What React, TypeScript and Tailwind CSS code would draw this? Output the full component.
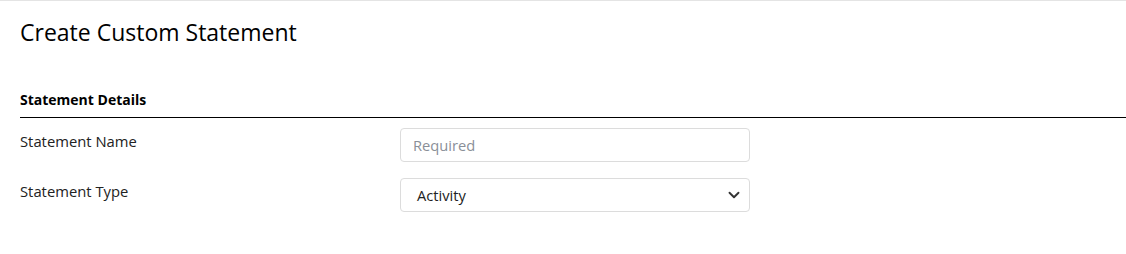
import { ChevronDown } from 'lucide-react';

export default function App() {
  return (
    <div className="min-h-[254px] w-full bg-white border-t border-[#e4e4e4] font-['Open_Sans',sans-serif] text-[#1a1a1a]">
      <div className="pl-5">
        <h1 className="pt-[17px] text-[23px] leading-[28px] font-medium text-black">Create Custom Statement</h1>

        <div className="mt-[45px]">
          <h2 className="text-[14px] font-bold leading-[17px] text-black">Statement Details</h2>
          <div className="mt-[9px] h-px bg-black" />
        </div>

        <div className="mt-[10px] flex flex-col gap-[16px]">
          <div className="flex items-start">
            <label className="w-[380px] pt-[2px] text-[14.8px] text-[#222]">Statement Name</label>
            <input
              type="text"
              placeholder="Required"
              className="w-[350px] h-[34px] rounded border border-[#dcdcdc] px-3 text-[14.7px] text-[#222] placeholder:text-[#8a8f98] outline-none"
            />
          </div>

          <div className="flex items-start">
            <label className="w-[380px] pt-[2px] text-[14.8px] text-[#222]">Statement Type</label>
            <div className="relative w-[350px] h-[34px] rounded border border-[#dcdcdc] flex items-center px-4 text-[14.7px] text-[#222]">
              <span>Activity</span>
              <ChevronDown className="absolute right-[6px] top-1/2 -translate-y-1/2 text-[#333]" size={18} strokeWidth={2.5} />
            </div>
          </div>
        </div>
      </div>
    </div>
  );
}
